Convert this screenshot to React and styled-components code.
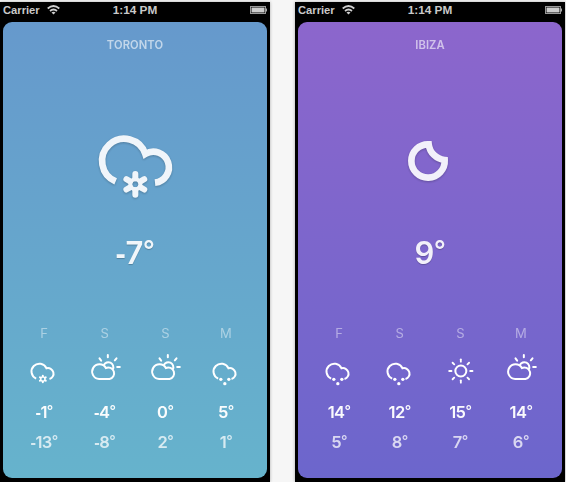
import React from 'react';
import styled, { createGlobalStyle } from 'styled-components';

const Global = createGlobalStyle`
  * { box-sizing: border-box; }
  body { margin: 0; background: #f5f5f5; overflow: hidden; font-family: Inter, "Liberation Sans", sans-serif; }
`;

const Stage = styled.main`
  display: flex;
  gap: 25px;
  width: 566px;
  height: 482px;
  padding-top: 2px;
  background: #f6f6f6;
`;

const Phone = styled.section`
  display: flex;
  flex-direction: column;
  flex: none;
  width: 270px;
  height: 480px;
  padding: 0 3px 4px;
  background: #000;
  box-shadow: 0 0 3px rgba(0, 0, 0, 0.3);
`;

const StatusBar = styled.header`
  display: grid;
  grid-template-columns: 1fr auto 1fr;
  align-items: center;
  flex: none;
  height: 20px;
  padding-bottom: 4px;
  color: #c9c9c9;
  font: bold 11.8px/16px "Liberation Sans", Arial, sans-serif;
`;

const Carrier = styled.div`
  display: flex;
  align-items: center;
  gap: 7px;
  font-size: 11.2px;
`;

const BatteryIcon = styled.svg`
  justify-self: end;
  display: block;
`;

const Card = styled.article`
  display: flex;
  flex-direction: column;
  align-items: center;
  flex: 1;
  border-radius: 9px;
  color: #fff;
  background: linear-gradient(${p => p.$from}, ${p => p.$to});
`;

const City = styled.h1`
  margin: 15px 0 0;
  font-size: 11.2px;
  line-height: 16px;
  font-weight: 600;
  letter-spacing: 0.1px;
  opacity: 0.6;
`;

const HeroIcon = styled.svg`
  display: block;
  flex: none;
  width: 100px;
  height: 80px;
  margin-top: 75px;
  opacity: 0.9;
  filter: drop-shadow(0 1px 1px rgba(0, 0, 0, 0.25));
`;

const Current = styled.div`
  margin-top: 20px;
  height: 50px;
  font-size: 31px;
  line-height: 50px;
  font-weight: 600;
  letter-spacing: -0.5px;
  opacity: 0.9;
  text-shadow: 0 1px 1px rgba(0, 0, 0, 0.25);
`;

const Forecast = styled.div`
  display: grid;
  grid-template-columns: repeat(4, 60.6px);
  margin-top: 45px;
`;

const Day = styled.div`
  display: flex;
  flex-direction: column;
  align-items: center;
  white-space: nowrap;
`;

const DayName = styled.span`
  font-size: 13px;
  line-height: 20px;
  opacity: 0.45;
`;

const DayIcon = styled.svg`
  display: block;
  width: 36px;
  height: 36px;
  margin-top: 9px;
`;

const Temp = styled.span`
  margin-top: ${p => (p.$low ? 6 : 12)}px;
  font-size: 16.5px;
  height: 24px;
  line-height: 24px;
  font-weight: 600;
  letter-spacing: -0.5px;
  opacity: ${p => (p.$low ? 0.74 : 0.97)};
`;

const Sign = styled.span`
  font-family: "Liberation Sans", sans-serif;
  font-weight: 700;
`;

const Degree = styled.span`
  position: relative;
  top: -0.14em;
  font-size: 0.86em;
  line-height: 0;
  font-weight: 500;
`;

function Reading({ value }) {
  return (
    <>
      {value < 0 && <Sign>-</Sign>}
      {Math.abs(value)}
      <Degree>°</Degree>
    </>
  );
}

const petals = [0, 60, 120, 180, 240, 300];

function HeroSnow() {
  return (
    <HeroIcon viewBox="-1 25 300 240" fill="none" stroke="#fff">
      <path d="M91 185A66.500 66.500 0 1 1 180 103A46.500 46.500 0 1 1 209 189" strokeWidth="20" />
      <circle cx="150" cy="194" r="15" strokeWidth="12" />
      {petals.map(a => (
        <path key={a} d="M150 176V163" strokeWidth="18" strokeLinecap="round" transform={`rotate(${a} 150 194)`} />
      ))}
    </HeroIcon>
  );
}

function HeroMoon() {
  return (
    <HeroIcon viewBox="-15 27 300 240" fill="none" stroke="#fff">
      <path d="M131 76A50 50 0 1 0 179 123A54 54 0 0 1 131 76Z" strokeWidth="20" />
    </HeroIcon>
  );
}

function OpenCloud() {
  return <path d="M107 176A23.500 23.500 0 1 1 138 145A16 16 0 1 1 147 177" />;
}

function SmallIcon({ kind }) {
  return (
    <DayIcon viewBox="76.5 96 108 108" fill="none" stroke="#fff" strokeWidth="6">
      {kind === 'snow' && (
        <>
          <OpenCloud />
          <circle cx="127" cy="177" r="6.5" strokeWidth="4" />
          {petals.map(a => (
            <path key={a} d="M127 169.500V167" strokeWidth="6" strokeLinecap="round" transform={`rotate(${a} 127 177)`} />
          ))}
        </>
      )}
      {kind === 'rain' && (
        <>
          <OpenCloud />
          <g fill="#fff" stroke="none">
            <circle cx="115" cy="178" r="5" />
            <circle cx="139" cy="178" r="5" />
            <circle cx="127" cy="191" r="5" />
          </g>
        </>
      )}
      {kind === 'partly' && (
        <>
          <path d="M113 177A22 22 0 1 1 133 144A17.500 17.500 0 1 1 144 177Z" />
          <path d="M127 135A14.500 14.500 0 1 1 154 148" />
          <path d="M139 105V112M114 115L119 122M165 115L160 121M167 141H175" strokeLinecap="round" strokeWidth="6" />
        </>
      )}
      {kind === 'sun' && (
        <>
          <circle cx="133" cy="153" r="16.5" />
          {[0, 45, 90, 135, 180, 225, 270, 315].map(a => (
            <path key={a} d="M133 125V118" strokeLinecap="round" strokeWidth="5.5" transform={`rotate(${a} 133 153)`} />
          ))}
        </>
      )}
    </DayIcon>
  );
}

function Status() {
  return (
    <StatusBar>
      <Carrier>
        Carrier
        <svg width="13" height="10" viewBox="0 0 13 10" fill="none" stroke="#d0d0d0" strokeWidth="1.7">
          <path d="M.7 3.500Q6.500-1.500 12.300 3.500M3 6Q6.500 3 10 6" />
          <path d="M4.500 7.500Q6.500 6 8.500 7.500L6.500 9.600Z" fill="#d0d0d0" stroke="none" />
        </svg>
      </Carrier>
      <span>1:14 PM</span>
      <BatteryIcon width="17" height="8" viewBox="0 0 17 8">
        <rect x=".5" y=".5" width="15" height="7" fill="none" stroke="#999" />
        <rect x="1.500" y="1.500" width="13" height="5" fill="#ccc" />
        <path d="M16 2.500h1v3h-1z" fill="#aaa" />
      </BatteryIcon>
    </StatusBar>
  );
}

const places = [
  {
    city: 'TORONTO', from: '#6699cc', to: '#66b3cc', now: -7, Hero: HeroSnow,
    days: [['F', 'snow', -1, -13], ['S', 'partly', -4, -8], ['S', 'partly', 0, 2], ['M', 'rain', 5, 1]],
  },
  {
    city: 'IBIZA', from: '#8c66cc', to: '#6c66cc', now: 9, Hero: HeroMoon,
    days: [['F', 'rain', 14, 5], ['S', 'rain', 12, 8], ['S', 'sun', 15, 7], ['M', 'partly', 14, 6]],
  },
];

export default function App() {
  return (
    <Stage>
      <Global />
      {places.map(({ city, from, to, now, Hero, days }) => (
        <Phone key={city}>
          <Status />
          <Card $from={from} $to={to}>
            <City>{city}</City>
            <Hero />
            <Current><Reading value={now} /></Current>
            <Forecast>
              {days.map(([name, kind, high, low], i) => (
                <Day key={i}>
                  <DayName>{name}</DayName>
                  <SmallIcon kind={kind} />
                  <Temp><Reading value={high} /></Temp>
                  <Temp $low><Reading value={low} /></Temp>
                </Day>
              ))}
            </Forecast>
          </Card>
        </Phone>
      ))}
    </Stage>
  );
}
